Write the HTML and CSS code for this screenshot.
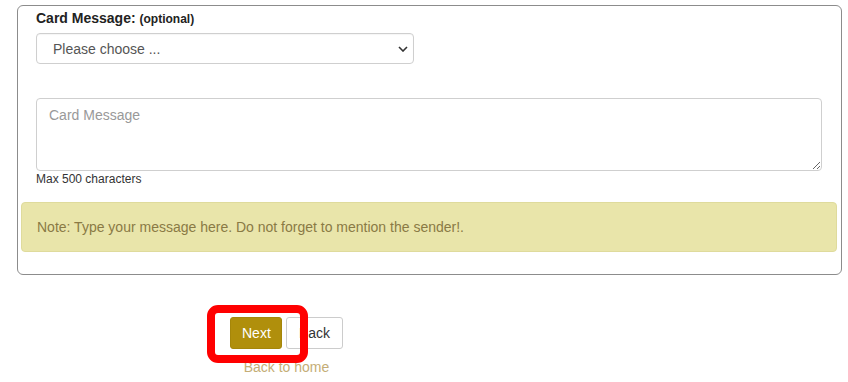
FILE: index.html
```html
<!DOCTYPE html>
<html lang="en">
<head>
<meta charset="utf-8">
<title>Card Message</title>
<link rel="stylesheet" href="styles.css">
</head>
<body>
<div class="card">
  <div class="group">
    <label class="label" for="msgsel">Card Message: <small>(optional)</small></label>
    <select id="msgsel" class="select">
      <option>Please choose ...</option>
    </select>
    <textarea class="textarea" placeholder="Card Message"></textarea>
    <div class="help">Max 500 characters</div>
  </div>
  <div class="note">Note: Type your message here. Do not forget to mention the sender!.</div>
</div>
<div class="actions">
  <div class="buttons">
    <button class="btn btn-next">Next</button>
    <button class="btn btn-back">Back</button>
    <span class="highlight"></span>
  </div>
  <a class="home" href="#">Back to home</a>
</div>
</body>
</html>
```

FILE: styles.css
```css
html, body {
  margin: 0;
  padding: 0;
  background: #ffffff;
}
body {
  font-family: "Liberation Sans", Arial, sans-serif;
  font-size: 14px;
  color: #333333;
}
.card {
  margin: 5px 6px 0 17px;
  border: 1px solid #8c8c8c;
  border-radius: 6px;
  padding: 2px 4px 22px 3px;
}
.group {
  padding: 0 15px;
  display: flex;
  flex-direction: column;
  align-items: flex-start;
}
.label {
  font-weight: bold;
  font-size: 14px;
  line-height: 20px;
  color: #222;
}
.label small {
  font-size: 12px;
}
.select {
  appearance: none;
  -webkit-appearance: none;
  margin-top: 4px;
  width: 378px;
  height: 31px;
  box-sizing: border-box;
  border: 1px solid #cfcfcf;
  border-radius: 4px;
  padding: 0 30px 0 16px;
  font-family: "Liberation Sans", Arial, sans-serif;
  font-size: 14px;
  color: #555;
  background: #fff url("data:image/svg+xml,%3Csvg xmlns='http://www.w3.org/2000/svg' width='10' height='6' viewBox='0 0 10 6'%3E%3Cpath d='M1 1l4 4 4-4' fill='none' stroke='%23333' stroke-width='1.6'/%3E%3C/svg%3E") no-repeat right 5px center;
  box-shadow: inset 0 1px 1px rgba(0,0,0,0.04);
}
.textarea {
  margin-top: 34px;
  width: 100%;
  height: 73px;
  box-sizing: border-box;
  border: 1px solid #cfcfcf;
  border-radius: 4px;
  padding: 6px 12px;
  font-family: "Liberation Sans", Arial, sans-serif;
  font-size: 14px;
  line-height: 20px;
  color: #555;
  display: block;
}
.textarea::placeholder {
  color: #999;
}
.help {
  font-size: 12px;
  line-height: 16px;
  color: #333;
}
.note {
  margin-top: 15px;
  background: #e9e5aa;
  border: 1px solid #dfdb9c;
  border-radius: 4px;
  padding: 14px 15px;
  line-height: 20px;
  color: #8a7a45;
}
.actions {
  width: 573px;
  margin-top: 42px;
  display: flex;
  flex-direction: column;
  align-items: center;
}
.buttons {
  position: relative;
  display: flex;
  gap: 4px;
}
.btn {
  height: 32px;
  box-sizing: border-box;
  border-radius: 3px;
  font-family: "Liberation Sans", Arial, sans-serif;
  font-size: 14px;
  padding: 0 11px;
  cursor: pointer;
}
.btn-next {
  background: #b08f0c;
  border: 1px solid #a5860a;
  color: #fff;
  width: 52px;
}
.btn-back {
  background: #fff;
  border: 1px solid #cccccc;
  color: #333;
  width: 57px;
}
.home {
  margin-top: 8px;
  color: #c4ad76;
  text-decoration: none;
  line-height: 20px;
}
.highlight {
  position: absolute;
  left: -23px;
  top: -12px;
  width: 101px;
  height: 58px;
  box-sizing: border-box;
  border: 8px solid #ff0000;
  border-radius: 11px;
  z-index: 2;
  pointer-events: none;
}
```
